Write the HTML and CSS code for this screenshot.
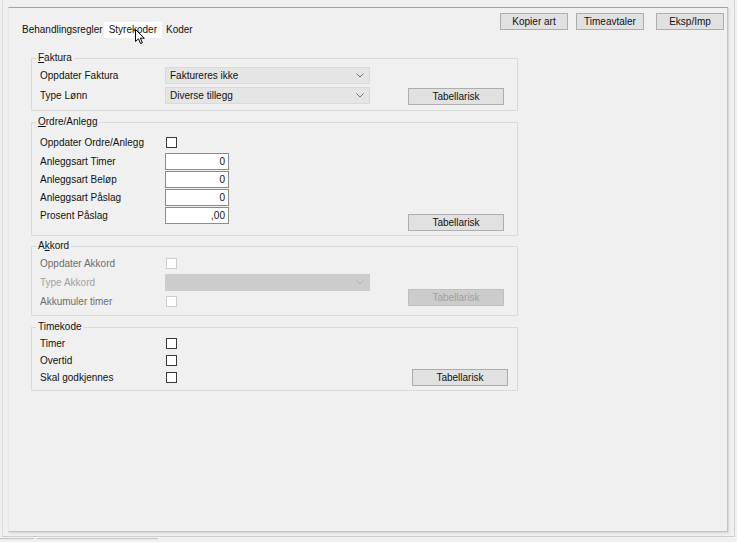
FILE: index.html
```html
<!DOCTYPE html>
<html lang="no">
<head>
<meta charset="utf-8">
<title>Styrekoder</title>
<link rel="stylesheet" href="styles.css">
</head>
<body>
<div class="screen">
  <div class="frame">
    <div class="panel">
      <div class="header">
        <div class="tabs">
          <span class="tab tab-first">Behandlingsregler</span>
          <span class="tab tab-active">Styrekoder<svg class="cursor" width="11" height="16" viewBox="0 0 11 16"><path d="M0.5 0.5 L0.5 12.5 L3.5 9.8 L5.6 14.6 L7.4 13.8 L5.4 9.2 L9.3 9.2 Z" fill="#fff" stroke="#000" stroke-width="1"/></svg></span>
          <span class="tab">Koder</span>
        </div>
        <div class="actions">
          <button class="btn btn-top">Kopier art</button>
          <button class="btn btn-top btn-gap8">Timeavtaler</button>
          <button class="btn btn-top btn-gap12">Eksp/Imp</button>
        </div>
      </div>

      <fieldset class="group group-faktura">
        <legend><u>F</u>aktura</legend>
        <div class="group-body">
          <div class="form form-faktura">
            <div class="row row-17">
              <span class="lbl">Oppdater Faktura</span>
              <div class="combo"><span>Faktureres ikke</span><svg class="chev" width="8" height="5" viewBox="0 0 8 5"><path d="M0.5 0.5 L4 4 L7.5 0.5" fill="none" stroke="#707070" stroke-width="1"/></svg></div>
            </div>
            <div class="row row-17">
              <span class="lbl">Type Lønn</span>
              <div class="combo"><span>Diverse tillegg</span><svg class="chev" width="8" height="5" viewBox="0 0 8 5"><path d="M0.5 0.5 L4 4 L7.5 0.5" fill="none" stroke="#707070" stroke-width="1"/></svg></div>
            </div>
          </div>
          <button class="btn btn-tab">Tabellarisk</button>
        </div>
      </fieldset>

      <fieldset class="group group-ordre">
        <legend><u>O</u>rdre/Anlegg</legend>
        <div class="group-body">
          <div class="form form-ordre">
            <div class="row row-20">
              <span class="lbl">Oppdater Ordre/Anlegg</span>
              <span class="chk"></span>
            </div>
            <div class="row row-18">
              <span class="lbl">Anleggsart Timer</span>
              <span class="num">0</span>
            </div>
            <div class="row row-18">
              <span class="lbl">Anleggsart Beløp</span>
              <span class="num">0</span>
            </div>
            <div class="row row-18">
              <span class="lbl">Anleggsart Påslag</span>
              <span class="num">0</span>
            </div>
            <div class="row row-18">
              <span class="lbl">Prosent Påslag</span>
              <span class="num">,00</span>
            </div>
          </div>
          <button class="btn btn-tab">Tabellarisk</button>
        </div>
      </fieldset>

      <fieldset class="group group-akkord">
        <legend>A<u>k</u>kord</legend>
        <div class="group-body">
          <div class="form form-akkord">
            <div class="row row-18">
              <span class="lbl lbl-dim">Oppdater Akkord</span>
              <span class="chk chk-off"></span>
            </div>
            <div class="row row-20">
              <span class="lbl lbl-off">Type Akkord</span>
              <div class="combo combo-off"><span></span><svg class="chev" width="8" height="5" viewBox="0 0 8 5"><path d="M0.5 0.5 L4 4 L7.5 0.5" fill="none" stroke="#b4b4b4" stroke-width="1"/></svg></div>
            </div>
            <div class="row row-18">
              <span class="lbl lbl-dim">Akkumuler timer</span>
              <span class="chk chk-off"></span>
            </div>
          </div>
          <button class="btn btn-tab btn-off btn-akkord">Tabellarisk</button>
        </div>
      </fieldset>

      <fieldset class="group group-timekode">
        <legend>Timekode</legend>
        <div class="group-body">
          <div class="form form-timekode">
            <div class="row row-17">
              <span class="lbl">Timer</span>
              <span class="chk"></span>
            </div>
            <div class="row row-17">
              <span class="lbl">Overtid</span>
              <span class="chk"></span>
            </div>
            <div class="row row-17">
              <span class="lbl">Skal godkjennes</span>
              <span class="chk"></span>
            </div>
          </div>
          <button class="btn btn-tab">Tabellarisk</button>
        </div>
      </fieldset>
    </div>
  </div>
  <div class="strip">
    <span class="strip-a"></span>
    <span class="strip-b"></span>
  </div>
</div>
</body>
</html>
```

FILE: styles.css
```css
* { box-sizing: border-box; }

html, body {
  margin: 0;
  padding: 0;
  background: #f0f0f0;
}

body {
  font-family: "Liberation Sans", Arial, sans-serif;
  font-size: 10px;
  color: #111111;
}

.screen {
  width: 737px;
  height: 542px;
  overflow: hidden;
}

.frame {
  margin-left: 2px;
  width: 733px;
  height: 537px;
  border-left: 1px solid #dcdcdc;
  border-right: 1px solid #d4d4d4;
  border-bottom: 1px solid #cfcfcf;
  padding: 7px 0 0 5px;
}

.panel {
  width: 720px;
  height: 525px;
  border-top: 1px solid #a3a3a3;
  border-left: 1px solid #e6e6e6;
  border-right: 1px solid #c4c4c4;
  border-bottom: 1px solid #c4c4c4;
  box-shadow: 1px 1px 2px rgba(0, 0, 0, 0.12);
  background: #f0f0f0;
}

/* header: tabs + action buttons */
.header {
  height: 44px;
  display: flex;
  justify-content: space-between;
  align-items: flex-start;
}

.tabs {
  display: flex;
  margin: 14px 0 0 9px;
}

.tab {
  height: 16px;
  line-height: 16px;
  padding: 0 4px;
  white-space: nowrap;
}

.tab-first { padding: 0 1px 0 4px; }

.tab-active {
  position: relative;
  background: #ffffff;
  padding: 0 5px;
}

.cursor {
  position: absolute;
  left: 31px;
  top: 7px;
}

.actions {
  display: flex;
  margin: 5px 3px 0 0;
}

.btn {
  font-family: "Liberation Sans", Arial, sans-serif;
  font-size: 10px;
  color: #111111;
  background: #e1e1e1;
  border: 1px solid #adadad;
  padding: 0;
  margin: 0;
  height: 17px;
  line-height: 15px;
  text-align: center;
}

.btn-top { width: 68px; }
.btn-gap8 { margin-left: 8px; }
.btn-gap12 { margin-left: 12px; }

/* group boxes */
.group {
  margin: 0 0 5px 22px;
  padding: 0 0 5px 8px;
  width: 487px;
  min-width: 0;
  border: 1px solid #d9d9d9;
}

.group legend {
  margin-left: -4px;
  padding: 0 2px;
  line-height: 12px;
  height: 12px;
}

.group-ordre { padding-bottom: 4px; margin-bottom: 4px; }
.group-timekode { padding-bottom: 4px; }

.group-body {
  display: flex;
  align-items: flex-end;
}

.form {
  width: 368px;
  display: flex;
  flex-direction: column;
}

.form-faktura { padding: 3px 0 1px; gap: 3px; }
.form-ordre { padding: 4px 0 7px; }
.form-akkord { padding: 2px 0 0; }
.form-timekode { padding: 2px 0 0; width: 372px; }

.row {
  display: flex;
  align-items: center;
}

.row-17 { height: 17px; }
.row-18 { height: 18px; }
.row-20 { height: 20px; }

.lbl {
  width: 125px;
  flex: none;
  white-space: nowrap;
}

.lbl-dim { color: #6d6d6d; }
.lbl-off { color: #a2a2a2; }

.combo {
  width: 205px;
  height: 17px;
  background: #e5e5e5;
  border: 1px solid #dadada;
  display: flex;
  align-items: center;
  justify-content: space-between;
  padding: 0 5px 0 4px;
}

.combo-off {
  background: #cccccc;
  border-color: #cccccc;
}

.chev { flex: none; }

.num {
  width: 64px;
  height: 17px;
  margin-top: 1px;
  background: #ffffff;
  border: 1px solid #8c8c8c;
  text-align: right;
  line-height: 15px;
  padding-right: 3px;
}

.chk {
  width: 11px;
  height: 11px;
  margin-left: 1px;
  background: #ffffff;
  border: 1px solid #3a3a3a;
}

.chk-off {
  border-color: #cccccc;
}

.btn-tab { width: 96px; flex: none; }

.btn-off {
  background: #cccccc;
  border-color: #bfbfbf;
  color: #a0a0a0;
}

.btn-akkord { margin-bottom: 4px; }

/* bottom strip below the frame */
.strip {
  display: flex;
  margin-top: 1px;
}

.strip span {
  height: 2px;
  border-top: 1px solid #c8c8c8;
  border-bottom: 1px solid #e8e8e8;
}

.strip-a { width: 34px; }
.strip-b { width: 121px; margin-left: 3px; }
```
